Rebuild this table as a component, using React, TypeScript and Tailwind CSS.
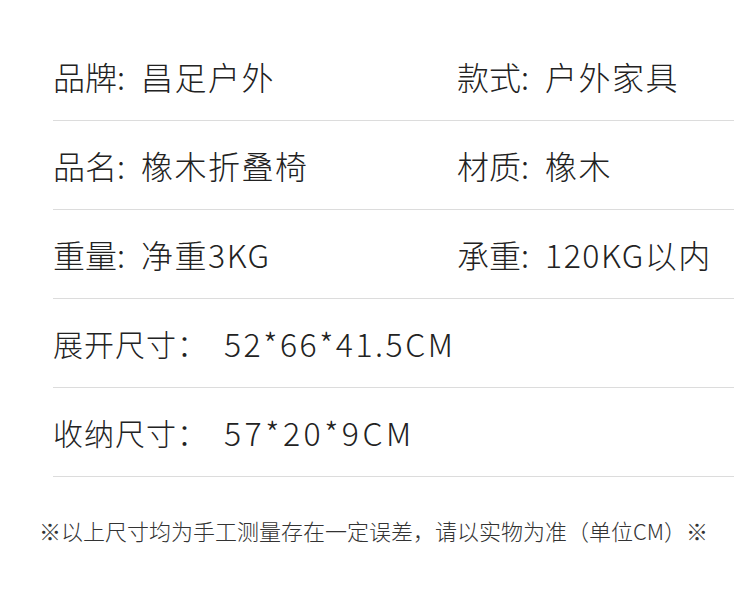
const font = { fontFamily: '"Noto Sans CJK SC", "Noto Sans", sans-serif' };

const pairs = [
  [
    ['品牌', '昌足户外'],
    ['款式', '户外家具'],
  ],
  [
    ['品名', '橡木折叠椅'],
    ['材质', '橡木'],
  ],
  [
    ['重量', '净重3KG'],
    ['承重', '120KG以内'],
  ],
];

const sizes = [
  ['展开尺寸', '52*66*41.5CM', 'tracking-[2.5px]'],
  ['收纳尺寸', '57*20*9CM', 'tracking-[3.5px]'],
];

const Spec = ({ label, value }: { label: string; value: string }) => (
  <div className="flex items-center whitespace-nowrap">
    <span>{label}:</span>
    <span className="ml-[16px] tracking-[1.5px]">{value}</span>
  </div>
);

const App = () => {
  return (
    <div
      className="w-[750px] h-[602px] bg-white text-[#222] font-light overflow-hidden pt-[32px]"
      style={font}
    >
      <div className="ml-[56px] w-[678px]">
        {pairs.map((row, i) => (
          <div
            key={i}
            className="grid grid-cols-[404px_1fr] items-center h-[89px] border-b border-[#dcdcdc] text-[32px] leading-none -ml-[3px]"
          >
            <Spec label={row[0][0]} value={row[0][1]} />
            <Spec label={row[1][0]} value={row[1][1]} />
          </div>
        ))}
        {sizes.map(([label, value, track]) => (
          <div
            key={label}
            className="flex items-center h-[89px] border-b border-[#dcdcdc] text-[30px] leading-none -ml-[3px] whitespace-nowrap"
          >
            <span className="tracking-[1px]">{label}：</span>
            <span className={`ml-[16px] text-[32px] ${track}`}>{value}</span>
          </div>
        ))}
      </div>
      <p className="mt-[42px] ml-[39px] text-[22px] leading-none text-[#333] whitespace-nowrap">
        ※以上尺寸均为手工测量存在一定误差，请以实物为准（单位CM）※
      </p>
    </div>
  );
};

export default App;
